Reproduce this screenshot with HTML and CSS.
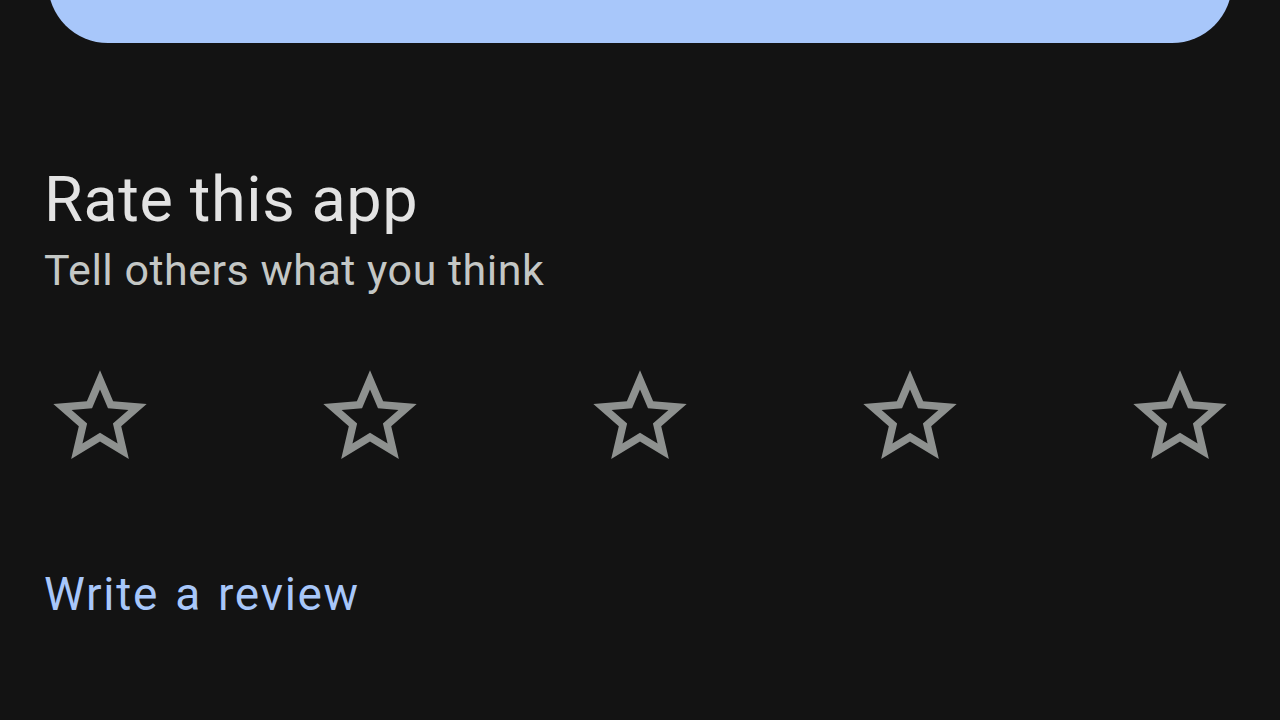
FILE: index.html
```html
<!DOCTYPE html>
<html lang="en">
<head>
<meta charset="utf-8">
<title>Rate this app</title>
<link rel="stylesheet" href="styles.css">
</head>
<body>
<div class="screen">
  <div class="install-btn"></div>
  <section class="rate">
    <h2 class="rate-title">Rate this app</h2>
    <p class="rate-sub">Tell others what you think</p>
    <div class="stars">
      <svg class="star" viewBox="0 0 24 24"><path d="M22 9.24l-7.19-.62L12 2 9.19 8.63 2 9.24l5.46 4.73L5.82 21 12 17.27 18.18 21l-1.63-7.03L22 9.24zM12 15.4l-3.760 2.27 1-4.28-3.32-2.88 4.38-.38L12 6.1l1.71 4.04 4.38.38-3.32 2.88 1 4.28L12 15.4z"/></svg>
      <svg class="star" viewBox="0 0 24 24"><path d="M22 9.24l-7.19-.62L12 2 9.19 8.63 2 9.24l5.46 4.73L5.82 21 12 17.27 18.18 21l-1.63-7.03L22 9.24zM12 15.4l-3.76 2.27 1-4.28-3.32-2.88 4.38-.38L12 6.1l1.71 4.04 4.38.38-3.32 2.88 1 4.28L12 15.4z"/></svg>
      <svg class="star" viewBox="0 0 24 24"><path d="M22 9.24l-7.19-.62L12 2 9.19 8.63 2 9.24l5.46 4.73L5.82 21 12 17.27 18.18 21l-1.63-7.03L22 9.24zM12 15.4l-3.76 2.27 1-4.28-3.32-2.88 4.38-.38L12 6.1l1.71 4.04 4.38.38-3.32 2.88 1 4.28L12 15.4z"/></svg>
      <svg class="star" viewBox="0 0 24 24"><path d="M22 9.24l-7.19-.62L12 2 9.19 8.63 2 9.24l5.46 4.73L5.82 21 12 17.27 18.18 21l-1.63-7.03L22 9.24zM12 15.4l-3.76 2.27 1-4.28-3.32-2.88 4.38-.38L12 6.1l1.71 4.04 4.38.38-3.32 2.88 1 4.28L12 15.4z"/></svg>
      <svg class="star" viewBox="0 0 24 24"><path d="M22 9.24l-7.19-.62L12 2 9.19 8.63 2 9.24l5.46 4.73L5.82 21 12 17.27 18.18 21l-1.63-7.03L22 9.24zM12 15.4l-3.76 2.27 1-4.28-3.32-2.88 4.38-.38L12 6.1l1.71 4.04 4.38.38-3.32 2.88 1 4.28L12 15.4z"/></svg>
    </div>
    <a class="write-review" href="#">Write a review</a>
  </section>
</div>
</body>
</html>
```

FILE: styles.css
```css
html, body {
  margin: 0;
  padding: 0;
  background: #131313;
}
.screen {
  width: 1280px;
  height: 720px;
  overflow: hidden;
  font-family: Roboto, "Open Sans", sans-serif;
}
.install-btn {
  height: 120px;
  margin: -77px 48px 0 48px;
  border-radius: 60px;
  background: #a8c7fa;
}
.rate {
  padding: 0 44px;
  display: flex;
  flex-direction: column;
}
.rate-title {
  margin: 119px 0 0 0;
  font-size: 63px;
  line-height: 76px;
  font-weight: 400;
  letter-spacing: 0.6px;
  color: #e3e3e3;
}
.rate-sub {
  margin: 6px 0 0 0;
  font-size: 43px;
  line-height: 52px;
  font-weight: 400;
  letter-spacing: 0.5px;
  color: #c4c7c5;
}
.stars {
  margin-top: 65px;
  display: flex;
  justify-content: space-between;
}
.star {
  width: 112px;
  height: 112px;
  fill: #8e918f;
}
.write-review {
  margin-top: 94px;
  font-size: 46px;
  line-height: 54px;
  letter-spacing: 1.7px;
  word-spacing: 3px;
  color: #a8c7fa;
  text-decoration: none;
  align-self: flex-start;
}
```
